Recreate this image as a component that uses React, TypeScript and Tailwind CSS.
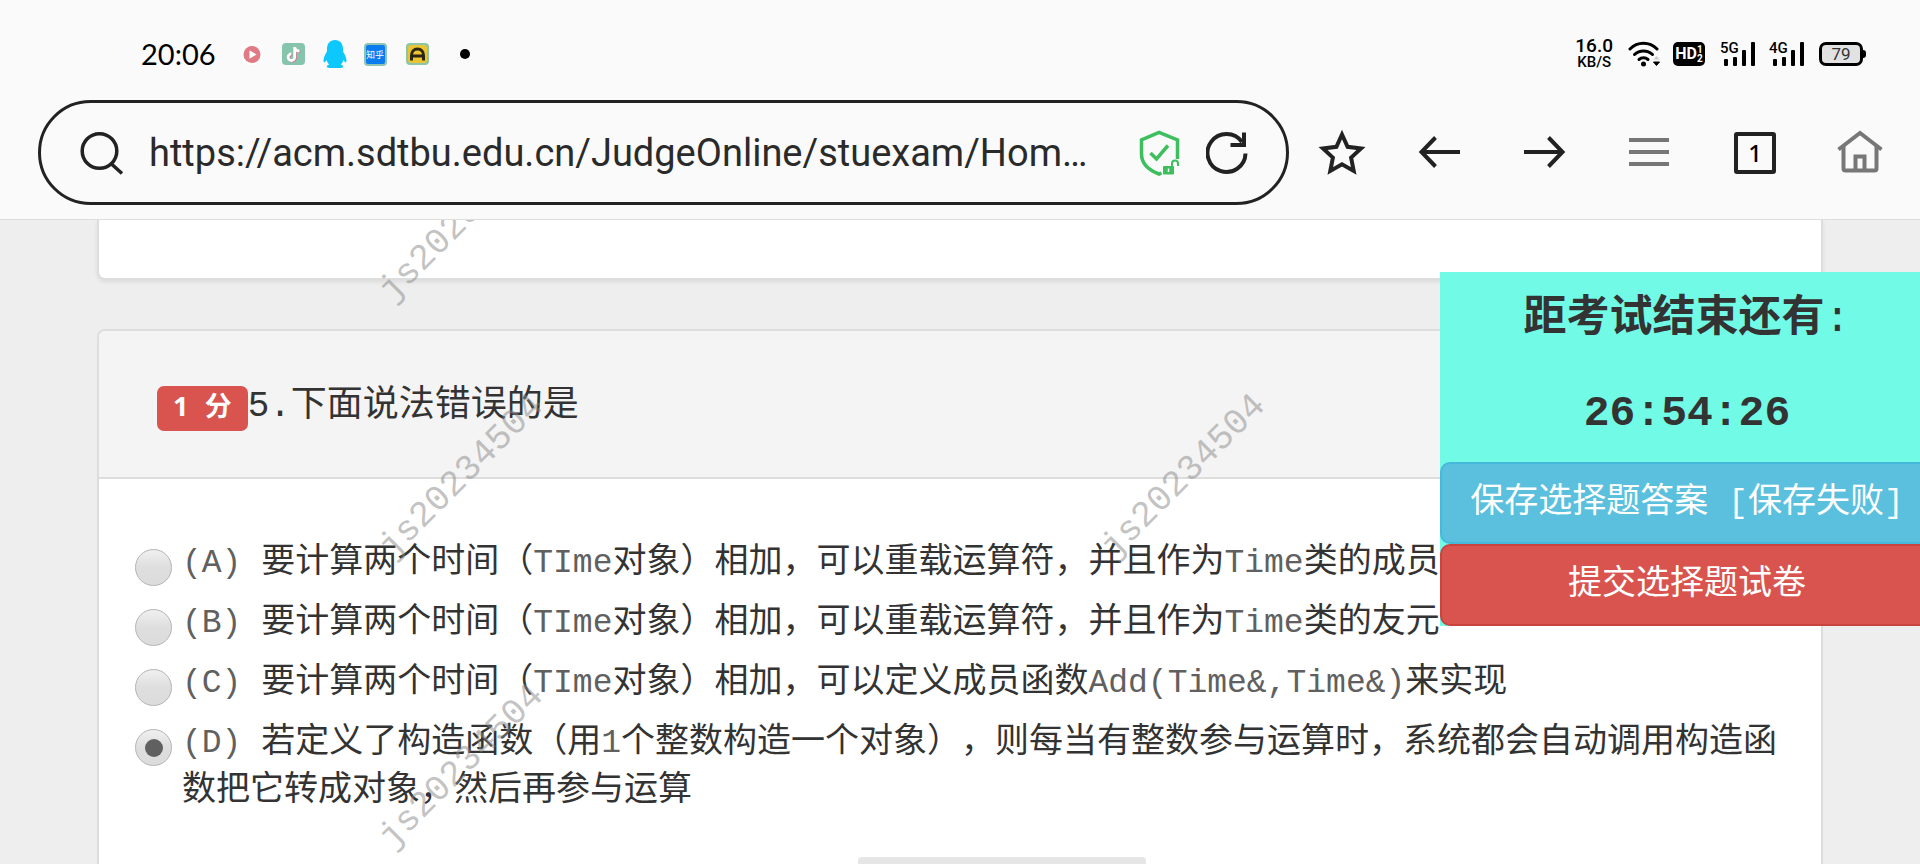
import { useState, type ReactNode } from "react";

const USER_ID = "js20234504";

const watermarks = [
  "left-[462px] top-[220px]",
  "left-[462px] top-[477px]",
  "left-[462px] top-[767px]",
  "left-[1184px] top-[477px]",
];

function Mono({ children }: { children: ReactNode }) {
  return (
    <span className="whitespace-pre font-['Liberation_Mono',monospace] text-[33px] leading-none text-[#606060]">
      {children}
    </span>
  );
}

const options: { key: string; body: ReactNode }[] = [
  {
    key: "A",
    body: (
      <>
        要计算两个时间（<Mono>TIme</Mono>对象）相加，可以重载运算符，并且作为<Mono>Time</Mono>类的成员
      </>
    ),
  },
  {
    key: "B",
    body: (
      <>
        要计算两个时间（<Mono>TIme</Mono>对象）相加，可以重载运算符，并且作为<Mono>Time</Mono>类的友元
      </>
    ),
  },
  {
    key: "C",
    body: (
      <>
        要计算两个时间（<Mono>TIme</Mono>对象）相加，可以定义成员函数<Mono>{"Add(Time&,Time&)"}</Mono>来实现
      </>
    ),
  },
  {
    key: "D",
    body: (
      <>
        若定义了构造函数（用<Mono>1</Mono>
        个整数构造一个对象），则每当有整数参与运算时，系统都会自动调用构造函数把它转成对象，然后再参与运算
      </>
    ),
  },
];

function AppIcons() {
  return (
    <div className="flex items-center">
      <svg className="ml-[25px] h-7 w-[22px]" viewBox="0 0 22 28" aria-hidden="true">
        <rect x="0" y="3" width="22" height="22" rx="5" fill="#fff" opacity=".6" />
        <circle cx="11" cy="14.5" r="8.5" fill="#e07a84" />
        <path d="M8.5 10.2v8.6l7-4.3z" fill="#fff" />
      </svg>
      <svg className="ml-[19px] h-7 w-[23px]" viewBox="0 0 23 28" aria-hidden="true">
        <rect x="0" y="3" width="23" height="22" rx="4" fill="#86c4ae" />
        <path
          d="M12.7 7v10.2a3.3 3.3 0 1 1-3.3-3.3M12.7 7c.4 2.6 2.2 4 4.8 4.2"
          transform="translate(.8 .7)"
          fill="none"
          stroke="#c9788a"
          strokeWidth="2.8"
        />
        <path
          d="M12.7 7v10.2a3.3 3.3 0 1 1-3.3-3.3M12.7 7c.4 2.6 2.2 4 4.8 4.2"
          fill="none"
          stroke="#fff"
          strokeWidth="2.8"
        />
      </svg>
      <svg className="ml-[18px] h-7 w-6" viewBox="0 0 24 28" aria-hidden="true">
        <path
          d="M12 0C6.8 0 4 3.8 4 9v2.5C2.5 14 .5 17.5.5 20.5c0 2 .8 2.5 2 1l1.200-1.600c.5 2 1.400 3.500 2.600 4.700-1.700.7-2.800 1.400-2.500 2.400.3 1 3.500 1 8.200 1s7.900 0 8.200-1c.3-1-.8-1.700-2.500-2.400 1.200-1.200 2.100-2.700 2.600-4.700l1.200 1.600c1.200 1.500 2 1 2-1 0-3-2-6.500-3.500-9V9C20 3.800 17.2 0 12 0z"
          fill="#0cc8fc"
        />
      </svg>
      <div className="ml-[17px] flex h-[23px] w-[23px] items-center justify-center rounded-[4px] border-2 border-[#8fc3b4] bg-[#0a7cf0] font-['Noto_Sans_CJK_SC',sans-serif] text-[9px] leading-none text-white">
        知乎
      </div>
      <svg className="ml-[19px] h-7 w-[23px]" viewBox="0 0 23 28" aria-hidden="true">
        <rect x="0" y="3" width="23" height="22" rx="4" fill="#8cc5a8" />
        <rect x="2" y="5" width="19" height="18" rx="3" fill="#e9c534" />
        <path
          d="M5.500 20.500v-5c0-4 2.500-6.500 6-6.500s6 2.500 6 6.500v5M5.500 16h12"
          fill="none"
          stroke="#2c2412"
          strokeWidth="3"
        />
      </svg>
      <span className="ml-[31px] h-[10px] w-[10px] rounded-full bg-black" />
    </div>
  );
}

function Signal({ label }: { label: string }) {
  return (
    <div className="relative h-6 w-9">
      <span className="absolute left-0 top-0 font-['Roboto',sans-serif] text-[15px] font-medium leading-[13px] text-black">
        {label}
      </span>
      <svg className="h-6 w-9" viewBox="0 0 36 24" aria-hidden="true">
        <rect x="4" y="17" width="4" height="7" rx="1" />
        <rect x="13" y="15" width="4" height="9" rx="1" />
        <rect x="22" y="8" width="4" height="16" rx="1" />
        <rect x="31" y="0" width="4" height="24" rx="1" />
      </svg>
    </div>
  );
}

function StatusBar() {
  return (
    <div className="flex h-[100px] items-center justify-between pl-[141px] pr-[54px] pt-2">
      <div className="flex items-center">
        <span className="font-['Lato',sans-serif] text-[29px] leading-8 text-black">20:06</span>
        <AppIcons />
      </div>
      <div className="flex items-center">
        <div className="flex flex-col items-center font-['Roboto',sans-serif] font-medium text-black">
          <span className="text-[19px] leading-4">16.0</span>
          <span className="text-[15px] leading-4">KB/S</span>
        </div>
        <svg className="ml-[15px] h-[26px] w-[34px]" viewBox="0 0 34 26" aria-hidden="true">
          <g fill="none" stroke="#000" strokeWidth="3" strokeLinecap="round">
            <path d="M2 8a19 19 0 0 1 27 0" />
            <path d="M6.500 13.500a13 13 0 0 1 18 0" />
            <path d="M11 18.500a7 7 0 0 1 9 0" />
          </g>
          <circle cx="15.500" cy="23" r="2.500" />
          <path d="M25.500 18.500l3-3.500 3 3.500z" fill="#ccc" />
          <path d="M25.500 21h6l-3 3.500z" stroke="#000" strokeWidth="1" />
        </svg>
        <div className="ml-[11px] flex h-6 w-8 items-center justify-center rounded-[5px] bg-black font-['Roboto',sans-serif] font-bold text-white">
          <span className="text-[16px] leading-6">HD</span>
          <span className="flex flex-col text-[10px] leading-[9px]">
            <span>1</span>
            <span>2</span>
          </span>
        </div>
        <div className="ml-[15px] flex gap-[13px]">
          <Signal label="5G" />
          <Signal label="4G" />
        </div>
        <div className="ml-[14px] flex items-center">
          <div className="flex h-6 w-11 items-center justify-center rounded-[7px] border-[3px] border-black bg-[#e2e2e2] font-['Roboto',sans-serif] text-[17px] leading-none text-[#333]">
            79
          </div>
          <span className="h-2 w-[3px] rounded-r-sm bg-black" />
        </div>
      </div>
    </div>
  );
}

function AddressBar() {
  return (
    <div className="flex h-[105px] flex-1 items-center rounded-full border-[3px] border-[#222] pl-[39px] pr-[38px]">
      <svg className="h-[46px] w-[46px] shrink-0" viewBox="0 0 46 46" fill="none" stroke="#222" strokeWidth="3.5" aria-hidden="true">
        <circle cx="19.5" cy="21" r="17.3" />
        <path d="M31.5 34l10.5 9.5" />
      </svg>
      <input
        aria-label="网址"
        readOnly
        value="https://acm.sdtbu.edu.cn/JudgeOnline/stuexam/Hom…"
        className="ml-[23px] min-w-0 flex-1 bg-transparent font-['Roboto',sans-serif] text-[38px] leading-[48px] text-[#2a2a2a] outline-none"
      />
      <svg className="ml-5 h-[46px] w-[44px] shrink-0" viewBox="0 0 44 46" aria-hidden="true">
        <g fill="none" stroke="#3cbf5c" strokeWidth="3.5">
          <path d="M39.5 29V10L21 2.5 3.5 10v14c0 9 7 16 17.5 20l2.500-1" />
          <path d="M12.5 23l6 6L30 15.5" />
        </g>
        <rect x="25" y="36" width="11" height="8.5" rx="1" fill="#3cbf5c" />
        <path d="M34 36v-2.500a3 3 0 0 1 6 0V36" fill="none" stroke="#3cbf5c" strokeWidth="2" />
        <path d="M30.5 38.5v3.500" stroke="#fff" strokeWidth="1.5" />
      </svg>
      <button type="button" aria-label="刷新" className="ml-6 shrink-0">
        <svg className="h-[44px] w-[42px]" viewBox="0 0 42 44" fill="none" stroke="#222" strokeWidth="4" aria-hidden="true">
          <path d="M39.5 22.500A19 19 0 1 1 36 11" />
          <path d="M38 1.5v12.500H24.5" />
        </svg>
      </button>
    </div>
  );
}

function NavButton({ label, children }: { label: string; children: ReactNode }) {
  return (
    <button type="button" aria-label={label} className="flex h-12 w-12 items-center justify-center">
      {children}
    </button>
  );
}

function Toolbar() {
  return (
    <div className="flex items-center pb-[14px] pl-[38px] pr-9">
      <AddressBar />
      <div className="ml-[29px] mr-[50px]">
        <NavButton label="收藏">
          <svg className="h-12 w-12" viewBox="0 0 48 48" fill="none" stroke="#222" strokeWidth="4" aria-hidden="true">
            <path d="M24 5.500l5.600 12.300 13.400 1.600-9.900 9.200 2.600 13.300L24 35.300l-11.700 6.600 2.600-13.300L5 19.400l13.400-1.600z" />
          </svg>
        </NavButton>
      </div>
      <div className="flex gap-[57px]">
        <NavButton label="后退">
          <svg className="h-12 w-12" viewBox="0 0 48 48" fill="none" stroke="#222" strokeWidth="4" aria-hidden="true">
            <path d="M44 23H6M19.500 8.500L5.500 23l14 14.500" />
          </svg>
        </NavButton>
        <NavButton label="前进">
          <svg className="h-12 w-12" viewBox="0 0 48 48" fill="none" stroke="#222" strokeWidth="4" aria-hidden="true">
            <path d="M3 23h38M27.500 8.500l14 14.500-14 14.500" />
          </svg>
        </NavButton>
        <NavButton label="菜单">
          <svg className="h-12 w-12" viewBox="0 0 48 48" fill="none" stroke="#777" strokeWidth="4" aria-hidden="true">
            <path d="M3 11h40M3 23h40M3 35h40" />
          </svg>
        </NavButton>
        <NavButton label="标签页">
          <span className="flex h-[42px] w-[42px] items-center justify-center rounded-[3px] border-4 border-[#222] font-['Noto_Sans',sans-serif] text-[24px] font-medium leading-none text-black">
            1
          </span>
        </NavButton>
        <NavButton label="主页">
          <svg className="h-12 w-12" viewBox="0 0 48 48" fill="none" stroke="#777" strokeWidth="4" aria-hidden="true">
            <path d="M2.500 20.500L24 4l21.500 16.500" />
            <path d="M7.500 17v22.500a2 2 0 0 0 2 2h29a2 2 0 0 0 2-2V17" />
            <path d="M19.500 41V27.500h9V41" />
          </svg>
        </NavButton>
      </div>
    </div>
  );
}

function QuestionCard() {
  const [answer, setAnswer] = useState("D");
  return (
    <section className="mt-[49px] flex-1 rounded-t-[8px] border-2 border-b-0 border-[#ddd] bg-white">
      <h3 className="flex h-[148px] items-center rounded-t-[6px] border-b-2 border-[#ddd] bg-[#f4f4f4] pl-[58px] text-[36px] leading-[48px]">
        <span className="mt-2 flex h-[45px] items-center whitespace-pre rounded-[7px] bg-[#d9534f] px-4 pb-1 font-['Noto_Sans','Noto_Sans_CJK_SC',sans-serif] text-[27px] font-bold leading-8 text-white">
          1<span className="font-['Liberation_Mono',monospace]"> </span>分
        </span>
        <span className="pt-1.5 font-['Liberation_Mono','Noto_Sans_CJK_SC',monospace]">5.下面说法错误的是</span>
      </h3>
      <div className="flex flex-col gap-2 pl-9 pr-9 pt-[55px]">
        {options.map(({ key, body }) => (
          <label key={key} htmlFor={`option-${key}`} className="flex items-start">
            <input
              id={`option-${key}`}
              type="radio"
              name="question-5"
              checked={answer === key}
              onChange={() => setAnswer(key)}
              className="mt-[15px] flex h-[37px] w-[37px] shrink-0 appearance-none items-center justify-center rounded-full border border-[#b4b4b4] bg-linear-to-b from-[#f0f0f0] via-[#dedede] to-[#dcdcdc] checked:before:h-[18px] checked:before:w-[18px] checked:before:rounded-full checked:before:bg-[#606060] checked:before:content-['']"
            />
            <span className="ml-[10px] text-[34px] leading-[48px] [text-spacing-trim:space-all]">
              <Mono>{`(${key}) `}</Mono>
              {body}
            </span>
          </label>
        ))}
      </div>
    </section>
  );
}

function TimerPanel() {
  return (
    <aside className="absolute -right-[14px] top-[52px] flex w-[494px] flex-col bg-[#71fae5] text-center">
      <h2 className="mt-3 font-['Noto_Sans_CJK_SC',sans-serif] text-[43px] font-bold leading-[56px]">
        距考试结束还有<span className="font-['Liberation_Mono',monospace] font-normal leading-none">:</span>
      </h2>
      <time className="mb-5 mt-[45px] font-['Liberation_Mono',monospace] text-[43px] font-bold leading-[56px]">
        26:54:26
      </time>
      <button
        type="button"
        className="h-[82px] whitespace-pre rounded-[10px] border-2 border-[#46b8da] bg-[#5bc0de] pb-2.5 text-[34px] leading-[48px] text-white"
      >
        保存选择题答案<span className="font-['Liberation_Mono',monospace] text-[33px] leading-none"> [</span>保存失败
        <span className="font-['Liberation_Mono',monospace] text-[33px] leading-none">]</span>
      </button>
      <button
        type="button"
        className="h-[82px] rounded-[10px] border-2 border-[#c9433f] bg-[#d9534f] pb-2.5 text-[34px] leading-[48px] text-white"
      >
        提交选择题试卷
      </button>
    </aside>
  );
}

export default function App() {
  return (
    <div className="relative flex h-screen flex-col overflow-hidden bg-[#eee] font-['Noto_Sans_CJK_SC',sans-serif] text-[#333]">
      <header className="border-b border-[#ddd] bg-[#fafafa]">
        <StatusBar />
        <Toolbar />
      </header>
      <main className="relative flex flex-1 flex-col overflow-hidden px-[97px]">
        <section className="h-[60px] shrink-0 rounded-b-[8px] border-2 border-t-0 border-[#ddd] bg-white shadow-[0_2px_4px_rgba(0,0,0,0.08)]" />
        <QuestionCard />
        <div aria-hidden="true" className="pointer-events-none absolute inset-x-0 bottom-0 -top-[220px]">
          {watermarks.map((place) => (
            <span
              key={place}
              className={`absolute -translate-x-1/2 -translate-y-1/2 -rotate-45 font-['Liberation_Mono',monospace] text-[36px] leading-none text-[#888]/50 ${place}`}
            >
              {USER_ID}
            </span>
          ))}
        </div>
        <TimerPanel />
      </main>
      <div className="absolute bottom-0 left-1/2 h-[7px] w-[288px] -translate-x-[102px] rounded-t-[4px] bg-[#e6e6e6]" />
    </div>
  );
}
